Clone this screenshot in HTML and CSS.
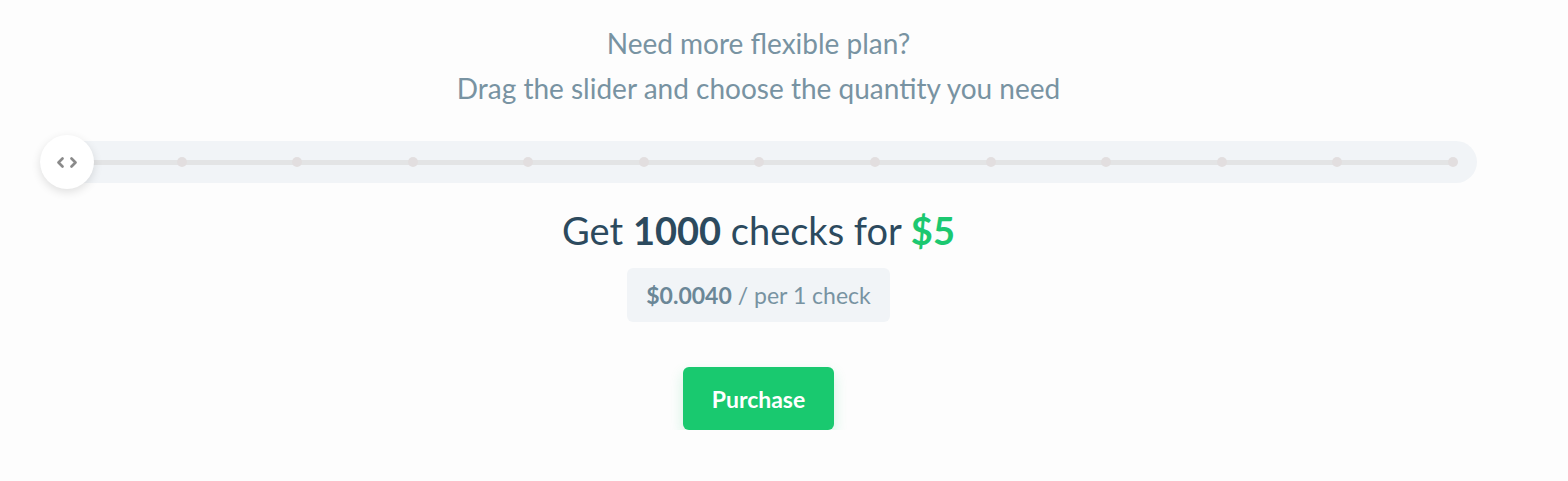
FILE: index.html
```html
<!DOCTYPE html>
<html lang="en">
<head>
<meta charset="utf-8">
<title>Flexible plan</title>
<link rel="stylesheet" href="styles.css">
</head>
<body>
<section class="plan">
  <div class="intro">
    <p class="intro-line">Need more flexible plan?</p>
    <p class="intro-line">Drag the slider and choose the quantity you need</p>
  </div>
  <div class="slider">
    <div class="rail">
      <span class="dot"></span><span class="dot"></span><span class="dot"></span><span class="dot"></span>
      <span class="dot"></span><span class="dot"></span><span class="dot"></span><span class="dot"></span>
      <span class="dot"></span><span class="dot"></span><span class="dot"></span><span class="dot"></span>
      <span class="dot"></span>
    </div>
    <div class="knob">
      <svg width="22" height="11" viewBox="0 0 22 11" aria-hidden="true">
        <path d="M6.5 1.5 L2.5 5.5 L6.5 9.5" fill="none" stroke="#8a8a8a" stroke-width="2.6" stroke-linecap="round" stroke-linejoin="round"/>
        <path d="M15.5 1.5 L19.5 5.5 L15.5 9.5" fill="none" stroke="#8a8a8a" stroke-width="2.6" stroke-linecap="round" stroke-linejoin="round"/>
      </svg>
    </div>
  </div>
  <h2 class="offer">Get <strong>1000</strong> checks for <span class="price">$5</span></h2>
  <div class="unit"><strong>$0.0040</strong> / per 1 check</div>
  <button class="buy" type="button">Purchase</button>
</section>
</body>
</html>
```
FILE: styles.css
```css
html, body {
  margin: 0;
  background: #fdfdfd;
}
body {
  font-family: "Source Sans Pro", Lato, "Noto Sans", sans-serif;
}
.plan {
  width: 1437px;
  margin-left: 40px;
  display: flex;
  flex-direction: column;
  align-items: center;
  padding-top: 28px;
}
.intro {
  display: flex;
  flex-direction: column;
  align-items: center;
  gap: 14px;
}
.intro-line {
  margin: 0;
  font-size: 28px;
  line-height: 31px;
  color: #7893a2;
}
.slider {
  align-self: stretch;
  position: relative;
  height: 42px;
  margin-top: 37px;
  border-radius: 21px;
  background: #f1f4f7;
  padding: 0 19px 0 21px;
  display: flex;
  align-items: center;
}
.rail {
  flex: 1;
  height: 10px;
  display: flex;
  justify-content: space-between;
  align-items: center;
  background: linear-gradient(#e3e4e5, #e3e4e5) center / calc(100% - 10px) 5px no-repeat;
}
.dot {
  width: 10px;
  height: 10px;
  border-radius: 50%;
  background: #e2dedf;
}
.knob {
  position: absolute;
  left: 0;
  top: -6px;
  width: 54px;
  height: 54px;
  border-radius: 50%;
  background: #fff;
  box-shadow: 0 3px 10px rgba(0, 0, 0, 0.12);
  display: flex;
  align-items: center;
  justify-content: center;
}
.offer {
  margin: 24px 0 0;
  font-size: 38px;
  line-height: 46px;
  font-weight: 400;
  color: #2c4a5e;
}
.offer strong {
  font-weight: 700;
}
.price {
  color: #1cc870;
  font-weight: 700;
}
.unit {
  margin-top: 15px;
  height: 54px;
  padding: 0 19px;
  display: flex;
  align-items: center;
  gap: 6px;
  border-radius: 6px;
  background: #f1f4f7;
  font-size: 23px;
  color: #7893a2;
}
.unit strong {
  color: #6b8797;
  font-weight: 700;
}
.buy {
  margin-top: 45px;
  width: 151px;
  height: 63px;
  border: 0;
  border-radius: 6px;
  background: #19c96f;
  color: #fff;
  font-family: inherit;
  font-size: 23px;
  font-weight: 700;
  box-shadow: 0 6px 14px rgba(25, 201, 111, 0.2);
  cursor: pointer;
}
```
